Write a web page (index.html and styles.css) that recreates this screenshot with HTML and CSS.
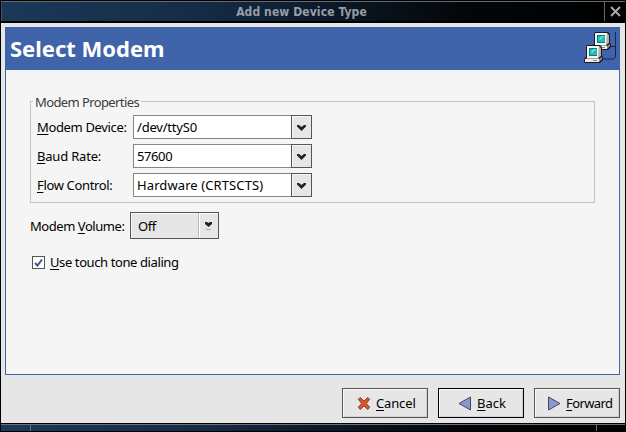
FILE: index.html
```html
<!DOCTYPE html>
<html lang="en">
<head>
<meta charset="utf-8">
<title>Add new Device Type</title>
<link rel="stylesheet" href="styles.css">
</head>
<body>
<div class="window">
  <header class="titlebar">
    <div class="caption"><span class="t-title">Add new Device Type</span></div>
    <div class="close"><svg width="11" height="11" viewBox="0 0 11 11"><path d="M1 1l9 9M10 1l-9 9" stroke="#aaa" stroke-width="2"/></svg></div>
  </header>
  <main class="client">
    <section class="page">
      <div class="banner">
        <h1><span class="t-head">Select Modem</span></h1>
        <svg class="net" width="34" height="36" viewBox="0 0 34 36">
          <path d="M28 15.500h4M32.500 1v25l-2 2H20" fill="none" stroke="#1c2748"/>
          <g id="pc">
            <path d="M12 1h13l2 2v9l1 1v3l-3 3H10l-1-1v-3l2-2V3z" fill="#16182a"/>
            <path d="M12 2h12v11l-1 1H12z" fill="#f7f5f0"/>
            <path d="M24 2l2 2v8l-3 2z" fill="#b5afa6"/>
            <path d="M14 4h8v8h-8z" fill="#087c80"/>
            <path d="M15 5h7v6h-7z" fill="#1fbcb4"/>
            <path d="M16 8l3-3h2l-4 4z" fill="#7ceadf"/>
            <path d="M12 14h12l-1 1H11z" fill="#aaa49c"/>
            <path d="M10 15h14v3H10z" fill="#f0ede6"/>
            <path d="M24 15l3-2v2l-3 3z" fill="#999184"/>
            <path d="M18 16.500h4" stroke="#888"/>
          </g>
          <use href="#pc" x="-8" y="13"/>
        </svg>
      </div>
      <div class="form">
        <fieldset class="group">
          <legend><span class="t-legend">Modem Properties</span></legend>
          <div class="row"><label><span class="t-dev"><u>M</u>odem Device:</span></label><div class="combo"><div class="entry"><span class="t-tty">/dev/ttyS0</span></div><div class="drop"><svg width="9" height="7" viewBox="0 0 9 7"><path d="M0 1h2l2.500 2L7 1h2v1.500L4.500 7 0 2.500z" fill="#222"/></svg></div></div></div>
          <div class="row"><label><span class="t-baud"><u>B</u>aud Rate:</span></label><div class="combo"><div class="entry"><span class="t-rate">57600</span></div><div class="drop"><svg width="9" height="7" viewBox="0 0 9 7"><path d="M0 1h2l2.500 2L7 1h2v1.500L4.500 7 0 2.500z" fill="#222"/></svg></div></div></div>
          <div class="row"><label><span class="t-flow"><u>F</u>low Control:</span></label><div class="combo"><div class="entry"><span class="t-hw">Hardware (CRTSCTS)</span></div><div class="drop"><svg width="9" height="7" viewBox="0 0 9 7"><path d="M0 1h2l2.500 2L7 1h2v1.500L4.500 7 0 2.500z" fill="#222"/></svg></div></div></div>
        </fieldset>
        <div class="volume">
          <label><span class="t-vol">Modem <u>V</u>olume:</span></label>
          <div class="option"><div class="value"><span class="t-off">Off</span></div><div class="arrow"><svg width="7" height="10" viewBox="0 0 7 10"><path d="M0 1h2l1.500 1L5 1h2v2L3.500 6 0 3z" fill="#222"/><path d="M1 8.500h5" stroke="#aaa"/></svg></div></div>
        </div>
        <div class="check">
          <div class="box"><svg width="9" height="9" viewBox="0 0 9 9"><path d="M1 5l2.500 2.500L8 1.500" fill="none" stroke="#3f5390" stroke-width="2"/></svg></div>
          <label><span class="t-tone"><u>U</u>se touch tone dialing</span></label>
        </div>
      </div>
    </section>
    <div class="actions">
      <div class="btn cancel"><svg width="14" height="15" viewBox="0 0 15 15"><path d="M1.500 3l2-2 4 4 4-4 2 2-3.500 4.500 3.500 4-2 2.500-4-4-4 4-2-2.500L5 7.500z" fill="#e4512e" stroke="#74352b"/></svg><span class="t-cancel"><u>C</u>ancel</span></div>
      <div class="btn default"><svg width="14" height="15" viewBox="0 0 14 15"><path d="M12.500 1v13L1 7.500z" fill="#8d97cf" stroke="#434660"/></svg><span class="t-back"><u>B</u>ack</span></div>
      <div class="btn"><svg width="14" height="15" viewBox="0 0 14 15"><path d="M1.500 1v13L13 7.500z" fill="#8d97cf" stroke="#434660"/></svg><span class="t-fwd"><u>F</u>orward</span></div>
    </div>
  </main>
  <footer class="grip"><i></i><b></b><i></i></footer>
</div>
</body>
</html>
```
FILE: styles.css
```css
* { box-sizing: border-box; }
body { margin: 0; font: 13px/18px "Noto Sans", "Open Sans", sans-serif; color: #000; background: #000; overflow: hidden; }
svg { display: block; flex: none; }
span { white-space: nowrap; }
u { text-decoration-thickness: 1px; text-underline-offset: 2px; }
.window { width: 626px; height: 432px; display: flex; flex-direction: column; padding: 1px 1px 1px; background: #000; }
.titlebar { height: 22px; flex: none; display: flex; border-top: 1px solid #666b70; border-bottom: 2px solid #000; background: linear-gradient(90deg, #1b3959, #142b45 33%, #0b1928 52%, #030609 75%, #000); }
.caption { flex: 1; display: flex; align-items: center; justify-content: center; padding-right: 3px; color: #989ea4; font: bold 12px/18px "DejaVu Sans Condensed", "DejaVu Sans", sans-serif; border-left: 1px solid #3a5470; }
.close { width: 21px; border-left: 1px solid #666; display: flex; align-items: center; justify-content: center; }
.client { height: 400px; flex: none; padding: 4px 5px 4px 4px; background: #e6e6e6; }
.page { height: 348px; border: 1px solid #4064aa; background: #f5f5f5; }
.banner { height: 42px; background: #4064aa; display: flex; align-items: center; justify-content: space-between; padding: 0 2px 0 4px; color: #fff; }
h1 { margin: 0; font-size: 22px; line-height: 28px; font-weight: 700; padding-bottom: 2px; }
.form { padding: 24px 24px 0; }
.group { margin: 0; border: 1px solid #c3c3c3; height: 109px; padding: 6px 0 0 6px; min-width: 0; }
legend { margin-left: -4px; padding: 0 2px; color: #3c3c3c; height: 15px; line-height: 16px; }
.row { display: flex; align-items: center; height: 24px; margin-bottom: 5px; }
.row label { width: 96px; }
.combo { display: flex; width: 179px; height: 24px; }
.entry { flex: 1; display: flex; align-items: center; padding-left: 3px; background: #fff; border: 1px solid #858585; border-right: 0; }
.drop { width: 21px; border: 1px solid #555; background: #e6e6e6; box-shadow: inset 1px 1px #f7f7f7; display: flex; align-items: center; justify-content: center; }
.volume { display: flex; align-items: center; margin-top: 9px; height: 27px; }
.volume label { width: 100px; padding-top: 1px; }
.option { display: flex; width: 89px; height: 27px; background: #e6e6e6; border: 1px solid #555; box-shadow: inset 1px 1px #f8f8f8; }
.value { flex: 1; padding: 1px 0 0 7px; display: flex; align-items: center; }
.arrow { width: 20px; border-left: 1px solid #b8b8b8; box-shadow: inset 1px 1px #fff; display: flex; align-items: center; justify-content: center; }
.check { display: flex; align-items: center; margin: 14px 0 0 2px; height: 18px; gap: 5px; }
.box { width: 13px; height: 13px; background: #fff; border: 1px solid #555; display: flex; align-items: center; justify-content: center; }
.actions { display: flex; justify-content: flex-end; gap: 10px; margin-top: 13px; }
.btn { width: 86px; height: 30px; border: 1px solid #555; background: #e6e6e6; box-shadow: inset 1px 1px #fafafa, inset -1px -1px #d0d0d0; display: flex; align-items: center; padding-left: 12px; gap: 5px; }
.cancel { padding-left: 14px; }
.default { border-color: #000; padding-left: 19px; }
.grip { height: 7px; flex: none; display: flex; margin-top: 1px; border-top: 1px solid #6c7277; background: linear-gradient(90deg, #1b3959, #142b45 33%, #0b1928 52%, #030609 75%, #000); }
.grip i { width: 30px; border-right: 1px solid #65717c; }
.grip b { flex: 1; }
.grip i:last-child { width: 29px; border-right: 0; border-left: 1px solid #65717c; }

/* Label tracking */
.t-title { letter-spacing: 0.1px; }
.t-legend { letter-spacing: -0.6px; }
.t-dev, .t-flow { letter-spacing: -0.35px; }
.t-tone { letter-spacing: -0.4px; }
.t-baud, .t-tty { letter-spacing: -0.2px; }
.t-rate { letter-spacing: -0.4px; }
.t-hw { letter-spacing: 0.1px; }
.t-vol { letter-spacing: -0.45px; }
.t-off { letter-spacing: -0.5px; }
.t-cancel { letter-spacing: -0.15px; }
.t-fwd { letter-spacing: -0.6px; }
```
